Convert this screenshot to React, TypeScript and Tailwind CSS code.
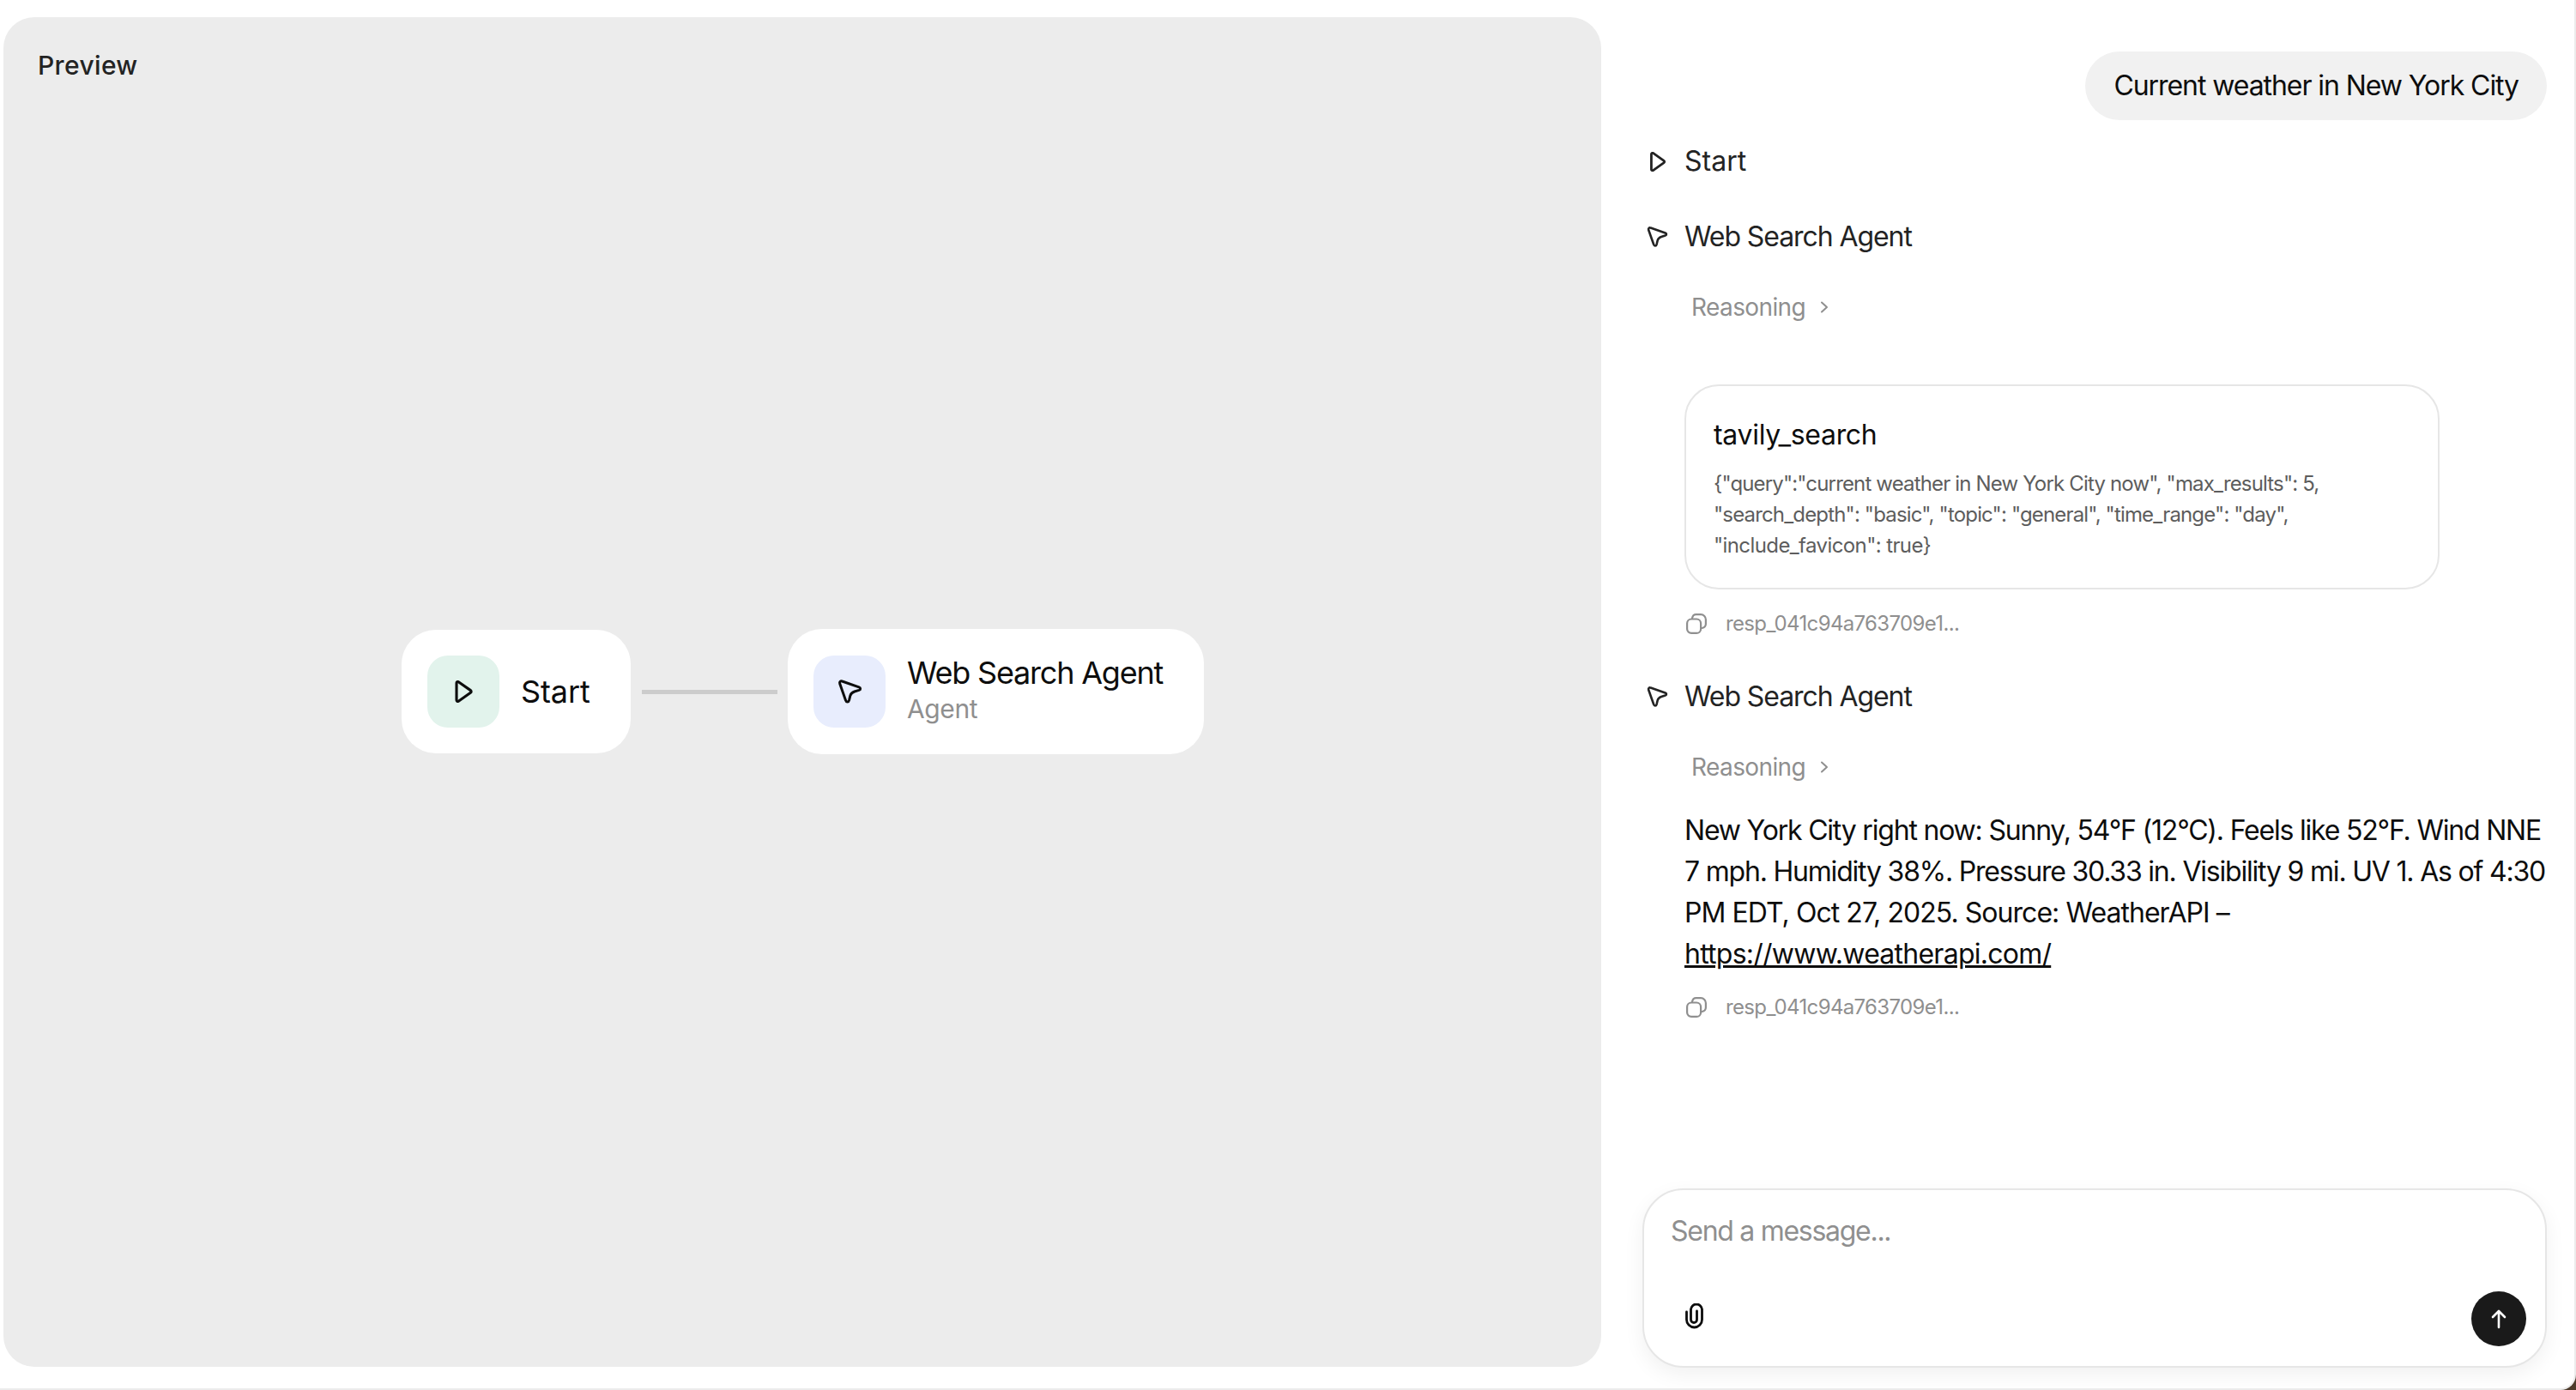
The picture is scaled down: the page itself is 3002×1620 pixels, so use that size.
import type { ReactNode } from 'react'

const font = 'font-["Inter","Liberation_Sans",sans-serif]'

function PlayIcon({ className }: { className?: string }) {
  return (
    <svg className={className} viewBox="5 2.5 15.5 19" fill="none" stroke="currentColor" strokeWidth={2.3} strokeLinejoin="round">
      <path d="M6.5 4.6c0-.9 1-1.4 1.7-.9l10.4 7.3c.7.5.7 1.5 0 2L8.2 20.3c-.7.5-1.7 0-1.7-.9V4.6z" />
    </svg>
  )
}

function CursorIcon({ className }: { className?: string }) {
  return (
    <svg className={className} viewBox="0 0 26 26" fill="none" stroke="currentColor" strokeWidth={2.6} strokeLinejoin="round">
      <path d="M3.2 5C2.6 3.2 4 2 5.6 2.6L22.6 8.5C24.4 9.2 24.4 11 22.6 11.6L18 13C15.6 13.8 14.4 15 13.7 17.2L12.6 21.8C12 24 9.8 24 9.2 22Z" />
    </svg>
  )
}

function CopyIcon() {
  return (
    <svg className="h-[24px] w-[24px] text-[#8f8f8f]" viewBox="0 0 24 24" fill="none" stroke="currentColor" strokeWidth={2.2}>
      <rect x="1.1" y="6.5" width="16" height="16.4" rx="5" />
      <path d="M7 5.5C7.5 3 9 1.2 11.5 1.2H17C20.5 1.2 22.9 4 22.9 7V12C22.9 14.5 21.5 16.5 18.5 17" strokeLinecap="round" />
    </svg>
  )
}

function AgentRow({ icon, label, iconPad }: { icon: ReactNode; label: string; iconPad: string }) {
  return (
    <div className="flex h-[48px] items-center text-[32px] text-[#232323]">
      <span className={`flex w-[73px] justify-start ${iconPad}`}>{icon}</span>
      <span className={label === 'Start' ? 'tracking-[0px]' : 'tracking-[-1.08px]'}>{label}</span>
    </div>
  )
}

function Reasoning() {
  return (
    <div className="ml-[81px] flex h-[40px] items-center text-[28px] tracking-[-0.6px] text-[#8f8f8f]">
      Reasoning
      <svg className="ml-[16px] h-[16px] w-[12px]" viewBox="0 0 12 16" fill="none" stroke="currentColor" strokeWidth={2} strokeLinecap="round" strokeLinejoin="round">
        <path d="M3 2.5L9 8l-6 5.5" />
      </svg>
    </div>
  )
}

function RespRow() {
  return (
    <div className="ml-[75px] flex h-[32px] items-center gap-[22px] text-[24px] tracking-[-0.65px] text-[#8f8f8f]">
      <CopyIcon />
      <span>resp_041c94a763709e1...</span>
    </div>
  )
}

export default function App() {
  return (
    <div className="h-[1620px] w-[3002px] bg-[#4d3b2b]">
      <div className={`${font} flex h-[1620px] w-[3002px] overflow-hidden rounded-br-[18px] border-r-2 border-b-2 border-[#ececec] bg-white`}>
        {/* Preview canvas */}
        <div className="ml-[4px] mt-[20px] mb-[25px] flex w-[1862px] flex-col rounded-[36px] bg-[#ececec]">
          <div className="pl-[40px] pt-[36px] text-[30px] font-medium leading-[40px] tracking-[0.35px] text-[#232323]">Preview</div>
          <div className="mt-[637px] ml-[464px] flex items-center">
            <div className="flex h-[144px] w-[267px] items-center gap-[25px] rounded-[40px] bg-white pl-[30px]">
              <div className="flex h-[84px] w-[84px] items-center justify-center rounded-[24px] bg-[#e2f3ec] text-[#0d0d0d]">
                <PlayIcon className="h-[26px] w-[21px]" />
              </div>
              <span className="text-[36px] tracking-[-0.1px] text-[#0d0d0d]">Start</span>
            </div>
            <div className="ml-[13px] h-[5px] w-[158px] bg-[#cccccc]" />
            <div className="ml-[12px] flex h-[146px] w-[485px] items-center gap-[25px] rounded-[40px] bg-white pl-[30px]">
              <div className="flex h-[84px] w-[84px] items-center justify-center rounded-[24px] bg-[#e8edfd] text-[#0d0d0d]">
                <CursorIcon className="h-[30px] w-[30px]" />
              </div>
              <div className="mb-[5px] flex flex-col">
                <span className="text-[36px] leading-[44px] tracking-[-1.2px] text-[#0d0d0d]">Web Search Agent</span>
                <span className="text-[30px] leading-[40px] tracking-[-0.4px] text-[#8f8f8f]">Agent</span>
              </div>
            </div>
          </div>
        </div>

        {/* Chat column */}
        <div className="ml-[24px] flex w-[1080px] flex-col">
          <div className="mt-[60px] mr-[2px] self-end rounded-full bg-[#f1f1f1] px-[33px] text-[32px] leading-[80px] tracking-[-1.07px] text-[#0d0d0d]">
            Current weather in New York City
          </div>
          <div className="mt-[24px]">
            <AgentRow iconPad="pl-[32px]" icon={<PlayIcon className="h-[23px] w-[20px]" />} label="Start" />
          </div>
          <div className="mt-[40px]">
            <AgentRow iconPad="pl-[28px]" icon={<CursorIcon className="h-[26px] w-[26px]" />} label="Web Search Agent" />
          </div>
          <div className="mt-[38px]">
            <Reasoning />
          </div>
          <div className="ml-[73px] mt-[70px] h-[239px] w-[880px] rounded-[40px] border-2 border-[#e6e6e6] bg-white px-[32px] pt-[35px]">
            <div className="text-[32px] leading-[44px] tracking-[-0.3px] text-[#0d0d0d]">tavily_search</div>
            <div className="mt-[17px] text-[24px] leading-[36px] tracking-[-0.84px] text-[#5d5d5d]">
              {'{"query":"current weather in New York City now", "max_results": 5,'}
              <br />
              {'"search_depth": "basic", "topic": "general", "time_range": "day",'}
              <br />
              <span className="tracking-[-0.6px]">{'"include_favicon": true}'}</span>
            </div>
          </div>
          <div className="mt-[24px]">
            <RespRow />
          </div>
          <div className="mt-[45px]">
            <AgentRow iconPad="pl-[28px]" icon={<CursorIcon className="h-[26px] w-[26px]" />} label="Web Search Agent" />
          </div>
          <div className="mt-[38px]">
            <Reasoning />
          </div>
          <div className="ml-[73px] mt-[30px] w-[1012px] text-[32px] leading-[48px] tracking-[-1.2px] text-[#0d0d0d]">
            New York City right now: Sunny, 54°F (12°C). Feels like 52°F. Wind NNE 7 mph. Humidity 38%. Pressure 30.33 in. Visibility 9 mi. UV 1. As of 4:30 <span className="tracking-[-0.95px]">PM EDT, Oct 27, 2025. Source: WeatherAPI –</span> <span className="underline tracking-[-0.75px]">https://www.weatherapi.com/</span>
          </div>
          <div className="mt-[22px]">
            <RespRow />
          </div>

          {/* Composer */}
          <div className="mt-[195px] ml-[24px] flex h-[209px] w-[1054px] flex-col rounded-[48px] border-2 border-[#e6e6e6] bg-white pl-[31px] pr-[22px] shadow-[0_8px_24px_rgba(0,0,0,0.06)]">
            <div className="mt-[28px] text-[32px] leading-[40px] tracking-[-1.28px] text-[#8f8f8f]">Send a message...</div>
            <div className="mt-[50px] flex items-center justify-between">
              <svg className="mb-[6px] ml-[16px] h-[30px] w-[24px] text-[#0d0d0d]" viewBox="0 0 24 30" fill="none" stroke="currentColor" strokeWidth={2.8} strokeLinecap="round">
                <path d="M2.5 10v9a9 9 0 0 0 18 0V7.5a6.5 6.5 0 0 0-13 0V19a3.5 3.5 0 0 0 7 0V9" />
              </svg>
              <div className="flex h-[64px] w-[64px] items-center justify-center rounded-full bg-[#1a1a1a]">
                <svg className="h-[28px] w-[28px] text-white" viewBox="0 0 28 28" fill="none" stroke="currentColor" strokeWidth={2.6} strokeLinecap="round" strokeLinejoin="round">
                  <path d="M14 24V5M7 12l7-7 7 7" />
                </svg>
              </div>
            </div>
          </div>
        </div>
      </div>
    </div>
  )
}
